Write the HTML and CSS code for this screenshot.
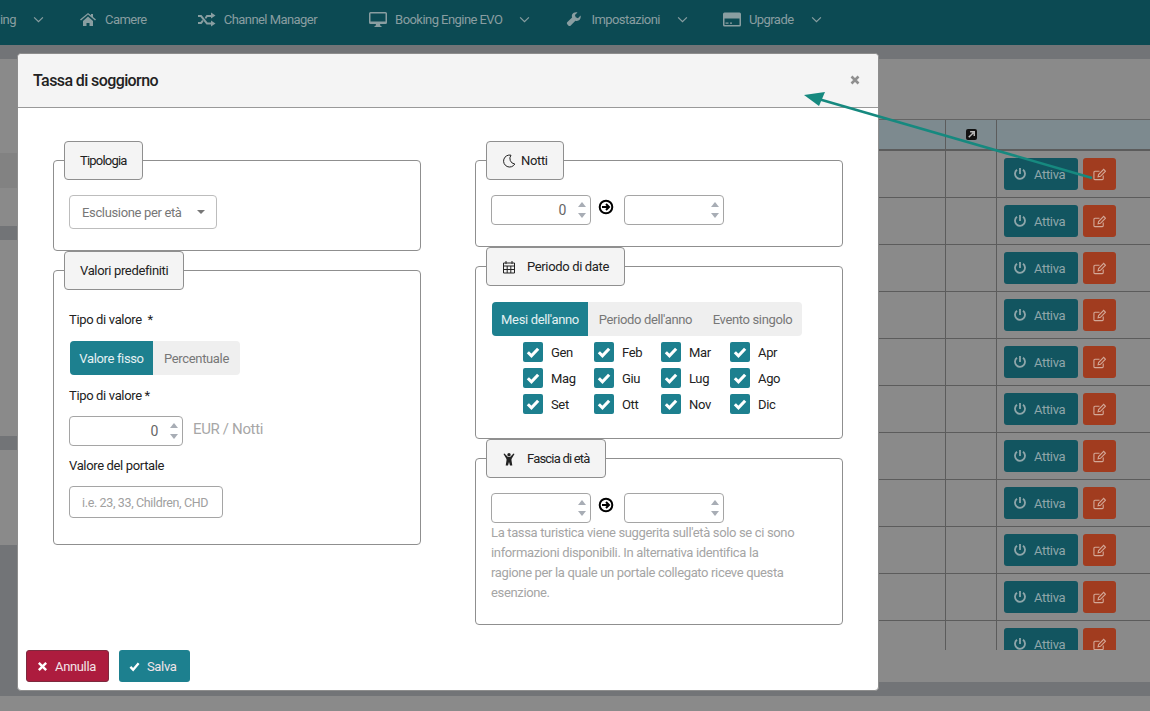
FILE: index.html
```html
<!DOCTYPE html>
<html lang="it">
<head>
<meta charset="utf-8">
<title>Tassa di soggiorno</title>
<link rel="stylesheet" href="styles.css">
</head>
<body>
<nav class="topnav">
  <span class="nav-item nav-cut">ing<svg class="chev" viewBox="0 0 12 8"><path d="M1 1.500l5 5 5-5"/></svg></span>
  <span class="nav-item nav-camere"><svg class="nav-ic" viewBox="0 0 16 14"><path d="M8 1L0 7.500l1 1 7-6 7 6 1-1-3-2.500V2h-2v1.300zM3 9l5-4.500L13 9v5H9.500v-3h-3v3H3z"/></svg>Camere</span>
  <span class="nav-item nav-channel"><svg class="nav-ic nav-ic-w" viewBox="0 0 18 14"><path d="M0 2.500h3.500l6 7.500H13V8l4.500 3L13 14v-2H8.500l-6-7.500H0zM0 9.500h2.500l1.800-2.200 1.200 1.600L3.500 11.500H0zM8.500 2.500H13V0l4.500 3L13 6V4.500H9.500L8 6.500 6.800 4.900z"/></svg>Channel Manager</span>
  <span class="nav-item nav-booking"><svg class="nav-ic nav-ic-w" viewBox="0 0 18 15"><path fill-rule="evenodd" d="M1.500 0h15A1.500 1.500 0 0 1 18 1.500v9a1.500 1.500 0 0 1-1.500 1.500H11l.5 2h1v1h-7v-1h1l.5-2H1.500A1.500 1.500 0 0 1 0 10.500v-9A1.500 1.500 0 0 1 1.500 0zM1.500 1.500v8h15v-8z"/></svg>Booking Engine EVO<svg class="chev" viewBox="0 0 12 8"><path d="M1 1.500l5 5 5-5"/></svg></span>
  <span class="nav-item nav-settings"><svg class="nav-ic" viewBox="0 0 16 16"><path d="M15.500 4l-3 3-2.500-1-1-2.500 3-3C9.500-.2 7 .7 6 2.700c-.6 1.200-.6 2.400-.2 3.500L.5 11.500a2 2 0 0 0 0 2.800l1 1a2 2 0 0 0 2.800 0l5.300-5.300c1.100.4 2.400.4 3.500-.2 2-1 3-3.500 2.400-5.800z"/></svg>Impostazioni<svg class="chev" viewBox="0 0 12 8"><path d="M1 1.500l5 5 5-5"/></svg></span>
  <span class="nav-item nav-upgrade"><svg class="nav-ic nav-ic-w" viewBox="0 0 18 14"><path fill-rule="evenodd" d="M1.500 0h15A1.500 1.500 0 0 1 18 1.500v11a1.500 1.500 0 0 1-1.500 1.500h-15A1.500 1.500 0 0 1 0 12.500v-11A1.500 1.500 0 0 1 1.500 0zM1.500 6v6.500h15V6zM2.500 10h3v1.200h-3zM7 10h2v1.200H7z"/></svg>Upgrade<svg class="chev" viewBox="0 0 12 8"><path d="M1 1.500l5 5 5-5"/></svg></span>
</nav>

<main class="page-bg">
  <div class="page-band"></div>
  <div class="bg-main">
    <div class="side-strip">
      <div class="strip s-a"></div>
      <div class="strip s-b"></div>
      <div class="strip s-c"></div>
      <div class="strip s-d"></div>
      <div class="strip s-e"></div>
      <div class="strip s-d"></div>
      <div class="strip s-f"></div>
      <div class="strip s-g"></div>
    </div>
    <div class="bg-right">
      <div class="bg-table">
        <div class="bg-head">
          <div class="cell-a"></div>
          <div class="cell-b"><span class="ext-ic"><svg viewBox="0 0 12 12"><path d="M3 9l5-5M4.500 3H9v4.500"/></svg></span></div>
          <div class="cell-c"></div>
        </div>
        <div class="bg-row"><div class="cell-a"></div><div class="cell-b"></div><div class="cell-c"><span class="activate"><svg class="pw" viewBox="0 0 14 14"><path d="M7 1v6M4 2.800a5 5 0 1 0 6 0"/></svg>Attiva</span><span class="edit"><svg class="ed" viewBox="0 0 14 14"><path d="M11 8v3.500a1 1 0 0 1-1 1H2a1 1 0 0 1-1-1v-7a1 1 0 0 1 1-1h5"/><path d="M5.500 9.500l.5-2.500 5.500-5.500 2 2L8 9z"/></svg></span></div></div>
        <div class="bg-row"><div class="cell-a"></div><div class="cell-b"></div><div class="cell-c"><span class="activate"><svg class="pw" viewBox="0 0 14 14"><path d="M7 1v6M4 2.800a5 5 0 1 0 6 0"/></svg>Attiva</span><span class="edit"><svg class="ed" viewBox="0 0 14 14"><path d="M11 8v3.500a1 1 0 0 1-1 1H2a1 1 0 0 1-1-1v-7a1 1 0 0 1 1-1h5"/><path d="M5.500 9.500l.5-2.500 5.500-5.500 2 2L8 9z"/></svg></span></div></div>
        <div class="bg-row"><div class="cell-a"></div><div class="cell-b"></div><div class="cell-c"><span class="activate"><svg class="pw" viewBox="0 0 14 14"><path d="M7 1v6M4 2.800a5 5 0 1 0 6 0"/></svg>Attiva</span><span class="edit"><svg class="ed" viewBox="0 0 14 14"><path d="M11 8v3.500a1 1 0 0 1-1 1H2a1 1 0 0 1-1-1v-7a1 1 0 0 1 1-1h5"/><path d="M5.500 9.500l.5-2.500 5.500-5.500 2 2L8 9z"/></svg></span></div></div>
        <div class="bg-row"><div class="cell-a"></div><div class="cell-b"></div><div class="cell-c"><span class="activate"><svg class="pw" viewBox="0 0 14 14"><path d="M7 1v6M4 2.800a5 5 0 1 0 6 0"/></svg>Attiva</span><span class="edit"><svg class="ed" viewBox="0 0 14 14"><path d="M11 8v3.500a1 1 0 0 1-1 1H2a1 1 0 0 1-1-1v-7a1 1 0 0 1 1-1h5"/><path d="M5.500 9.500l.5-2.500 5.500-5.500 2 2L8 9z"/></svg></span></div></div>
        <div class="bg-row"><div class="cell-a"></div><div class="cell-b"></div><div class="cell-c"><span class="activate"><svg class="pw" viewBox="0 0 14 14"><path d="M7 1v6M4 2.800a5 5 0 1 0 6 0"/></svg>Attiva</span><span class="edit"><svg class="ed" viewBox="0 0 14 14"><path d="M11 8v3.500a1 1 0 0 1-1 1H2a1 1 0 0 1-1-1v-7a1 1 0 0 1 1-1h5"/><path d="M5.500 9.500l.5-2.500 5.500-5.500 2 2L8 9z"/></svg></span></div></div>
        <div class="bg-row"><div class="cell-a"></div><div class="cell-b"></div><div class="cell-c"><span class="activate"><svg class="pw" viewBox="0 0 14 14"><path d="M7 1v6M4 2.800a5 5 0 1 0 6 0"/></svg>Attiva</span><span class="edit"><svg class="ed" viewBox="0 0 14 14"><path d="M11 8v3.500a1 1 0 0 1-1 1H2a1 1 0 0 1-1-1v-7a1 1 0 0 1 1-1h5"/><path d="M5.500 9.500l.5-2.500 5.500-5.500 2 2L8 9z"/></svg></span></div></div>
        <div class="bg-row"><div class="cell-a"></div><div class="cell-b"></div><div class="cell-c"><span class="activate"><svg class="pw" viewBox="0 0 14 14"><path d="M7 1v6M4 2.800a5 5 0 1 0 6 0"/></svg>Attiva</span><span class="edit"><svg class="ed" viewBox="0 0 14 14"><path d="M11 8v3.500a1 1 0 0 1-1 1H2a1 1 0 0 1-1-1v-7a1 1 0 0 1 1-1h5"/><path d="M5.500 9.500l.5-2.500 5.500-5.500 2 2L8 9z"/></svg></span></div></div>
        <div class="bg-row"><div class="cell-a"></div><div class="cell-b"></div><div class="cell-c"><span class="activate"><svg class="pw" viewBox="0 0 14 14"><path d="M7 1v6M4 2.800a5 5 0 1 0 6 0"/></svg>Attiva</span><span class="edit"><svg class="ed" viewBox="0 0 14 14"><path d="M11 8v3.500a1 1 0 0 1-1 1H2a1 1 0 0 1-1-1v-7a1 1 0 0 1 1-1h5"/><path d="M5.500 9.500l.5-2.500 5.500-5.500 2 2L8 9z"/></svg></span></div></div>
        <div class="bg-row"><div class="cell-a"></div><div class="cell-b"></div><div class="cell-c"><span class="activate"><svg class="pw" viewBox="0 0 14 14"><path d="M7 1v6M4 2.800a5 5 0 1 0 6 0"/></svg>Attiva</span><span class="edit"><svg class="ed" viewBox="0 0 14 14"><path d="M11 8v3.500a1 1 0 0 1-1 1H2a1 1 0 0 1-1-1v-7a1 1 0 0 1 1-1h5"/><path d="M5.500 9.500l.5-2.500 5.500-5.500 2 2L8 9z"/></svg></span></div></div>
        <div class="bg-row"><div class="cell-a"></div><div class="cell-b"></div><div class="cell-c"><span class="activate"><svg class="pw" viewBox="0 0 14 14"><path d="M7 1v6M4 2.800a5 5 0 1 0 6 0"/></svg>Attiva</span><span class="edit"><svg class="ed" viewBox="0 0 14 14"><path d="M11 8v3.500a1 1 0 0 1-1 1H2a1 1 0 0 1-1-1v-7a1 1 0 0 1 1-1h5"/><path d="M5.500 9.500l.5-2.500 5.500-5.500 2 2L8 9z"/></svg></span></div></div>
        <div class="bg-row"><div class="cell-a"></div><div class="cell-b"></div><div class="cell-c"><span class="activate"><svg class="pw" viewBox="0 0 14 14"><path d="M7 1v6M4 2.800a5 5 0 1 0 6 0"/></svg>Attiva</span><span class="edit"><svg class="ed" viewBox="0 0 14 14"><path d="M11 8v3.500a1 1 0 0 1-1 1H2a1 1 0 0 1-1-1v-7a1 1 0 0 1 1-1h5"/><path d="M5.500 9.500l.5-2.500 5.500-5.500 2 2L8 9z"/></svg></span></div></div>
      </div>
    </div>
  </div>
  <div class="page-band"></div>
</main>

<section class="dialog">
  <header class="dialog-head">
    <h1 class="dialog-title">Tassa di soggiorno</h1>
    <svg class="dialog-close" viewBox="0 0 10 10"><path d="M1.500 1.500l7 7M8.500 1.500l-7 7"/></svg>
  </header>
  <div class="dialog-body">
    <div class="col">
      <fieldset class="box box-type">
        <legend class="tag tag-tight">Tipologia</legend>
        <div class="select">Esclusione per età<span class="caret"></span></div>
      </fieldset>
      <fieldset class="box box-values">
        <legend class="tag">Valori predefiniti</legend>
        <div class="label label-first">Tipo di valore &nbsp;*</div>
        <div class="seg">
          <span class="seg-item seg-83 on">Valore fisso</span><span class="seg-item seg-87">Percentuale</span>
        </div>
        <div class="label label-second">Tipo di valore *</div>
        <div class="num-row">
          <div class="num num-wide">0<span class="spin"><i class="up"></i><i class="down"></i></span></div>
          <span class="unit">EUR / Notti</span>
        </div>
        <div class="label label-third">Valore del portale</div>
        <div class="text-input">i.e. 23, 33, Children, CHD</div>
      </fieldset>
    </div>
    <div class="col">
      <fieldset class="box box-nights">
        <legend class="tag"><svg class="tag-ic tag-moon" viewBox="0 0 14 14"><path d="M9 1.200A6 6 0 1 0 12.800 10 5.500 5.500 0 0 1 9 1.200z"/></svg>Notti</legend>
        <div class="range">
          <div class="num">0<span class="spin"><i class="up"></i><i class="down"></i></span></div>
          <svg class="go" viewBox="0 0 16 16"><circle cx="8" cy="8" r="6.300"/><path d="M4 8h7M8 5l3 3-3 3"/></svg>
          <div class="num"><span class="spin"><i class="up"></i><i class="down"></i></span></div>
        </div>
      </fieldset>
      <fieldset class="box box-dates">
        <legend class="tag"><svg class="tag-ic" viewBox="0 0 14 14"><path d="M1.500 3h11v10h-11zM1.500 6h11M4 1v3M10 1v3M5.200 6v7M8.800 6v7M1.500 9.500h11"/></svg>Periodo di date</legend>
        <div class="seg seg-dates">
          <span class="seg-item seg-96 on">Mesi dell'anno</span><span class="seg-item seg-115">Periodo dell'anno</span><span class="seg-item seg-99">Evento singolo</span>
        </div>
        <div class="months">
          <label class="month"><span class="chk"><svg viewBox="0 0 14 14"><path d="M3 7.200l2.800 2.800L11 4.500"/></svg></span>Gen</label>
          <label class="month"><span class="chk"><svg viewBox="0 0 14 14"><path d="M3 7.200l2.800 2.800L11 4.500"/></svg></span>Feb</label>
          <label class="month"><span class="chk"><svg viewBox="0 0 14 14"><path d="M3 7.200l2.800 2.800L11 4.500"/></svg></span>Mar</label>
          <label class="month"><span class="chk"><svg viewBox="0 0 14 14"><path d="M3 7.200l2.800 2.800L11 4.500"/></svg></span>Apr</label>
          <label class="month"><span class="chk"><svg viewBox="0 0 14 14"><path d="M3 7.200l2.800 2.800L11 4.500"/></svg></span>Mag</label>
          <label class="month"><span class="chk"><svg viewBox="0 0 14 14"><path d="M3 7.200l2.800 2.800L11 4.500"/></svg></span>Giu</label>
          <label class="month"><span class="chk"><svg viewBox="0 0 14 14"><path d="M3 7.200l2.800 2.800L11 4.500"/></svg></span>Lug</label>
          <label class="month"><span class="chk"><svg viewBox="0 0 14 14"><path d="M3 7.200l2.800 2.800L11 4.500"/></svg></span>Ago</label>
          <label class="month"><span class="chk"><svg viewBox="0 0 14 14"><path d="M3 7.200l2.800 2.800L11 4.500"/></svg></span>Set</label>
          <label class="month"><span class="chk"><svg viewBox="0 0 14 14"><path d="M3 7.200l2.800 2.800L11 4.500"/></svg></span>Ott</label>
          <label class="month"><span class="chk"><svg viewBox="0 0 14 14"><path d="M3 7.200l2.800 2.800L11 4.500"/></svg></span>Nov</label>
          <label class="month"><span class="chk"><svg viewBox="0 0 14 14"><path d="M3 7.200l2.800 2.800L11 4.500"/></svg></span>Dic</label>
        </div>
      </fieldset>
      <fieldset class="box box-age">
        <legend class="tag tag-tight"><svg class="tag-ic tag-solid" viewBox="0 0 14 14"><circle cx="7" cy="2.800" r="1.700"/><path d="M1.500 2l1-.6L6 5h2l3.500-3.600 1 .6L9.500 7v1.500l.8 5H8L7 10l-1 3.500H3.700l.8-5V7z"/></svg>Fascia di età</legend>
        <div class="range">
          <div class="num"><span class="spin"><i class="up"></i><i class="down"></i></span></div>
          <svg class="go" viewBox="0 0 16 16"><circle cx="8" cy="8" r="6.300"/><path d="M4 8h7M8 5l3 3-3 3"/></svg>
          <div class="num"><span class="spin"><i class="up"></i><i class="down"></i></span></div>
        </div>
        <p class="help">La tassa turistica viene suggerita sull'età solo se ci sono informazioni disponibili. In alternativa identifica la ragione per la quale un portale collegato riceve questa esenzione.</p>
      </fieldset>
    </div>
  </div>
  <footer class="dialog-foot">
    <span class="btn btn-cancel"><svg viewBox="0 0 12 12"><path d="M2 2l8 8M10 2l-8 8"/></svg>Annulla</span>
    <span class="btn btn-save"><svg viewBox="0 0 12 12"><path d="M1.500 6.500l3 3 6-7"/></svg>Salva</span>
  </footer>
</section>

<svg class="arrow" viewBox="800 88 296 94"><path class="arrow-line" d="M1092 178L815 98"/><path class="arrow-head" d="M804 95l21-3-6 14z"/></svg>
</body>
</html>
```
FILE: styles.css
```css
* { box-sizing: border-box; }
html { background: #8a8a8a; }
html, body { margin: 0; height: 711px; }
body {
  position: relative;
  width: 1150px;
  font-family: "Roboto", "Lato", "Liberation Sans", sans-serif;
  font-size: 13px;
  letter-spacing: -.35px;
  color: #222;
  background: #8a8a8a;
  display: flex;
  flex-direction: column;
}
.topnav {
  height: 45px;
  background: #0c4a53;
  color: #899ea1;
  display: flex;
  align-items: center;
  padding-bottom: 7px;
  letter-spacing: -.55px;
  flex: none;
}
.nav-item { display: flex; align-items: center; white-space: nowrap; }
.nav-camere { margin-left: 36px; }
.nav-channel { margin-left: 51px; }
.nav-booking { margin-left: 52px; }
.nav-settings { margin-left: 36px; }
.nav-upgrade { margin-left: 35px; }
.nav-ic { width: 16px; height: 14px; margin-right: 9px; fill: #899ea1; flex: none; }
.nav-ic-w { width: 18px; height: 15px; margin-right: 8px; }
.chev { width: 11px; height: 7px; margin-left: 17px; fill: none; stroke: #899ea1; stroke-width: 1.400; flex: none; }

.page-bg { flex: 1; display: flex; flex-direction: column; background: #8a8a8a; }
.page-band { height: 14px; background: #727477; flex: none; }
.bg-main { display: flex; height: 623px; flex: none; }
.side-strip { width: 879px; flex: none; display: flex; flex-direction: column; }
.strip { flex: none; }
.s-a { height: 94px; }
.s-b { height: 35px; background: #828282; }
.s-c { height: 38px; }
.s-d { height: 14px; background: #727477; }
.s-e { height: 196px; }
.s-f { height: 95px; }
.s-g { height: 137px; background: #727477; }
.bg-right { flex: 1; padding-top: 60px; }
.bg-table { height: 531px; overflow: hidden; }
.bg-head { display: flex; height: 32px; background: #7d8a8f; border-top: 1px solid #646464; border-bottom: 2px solid #5c5c5c; }
.bg-row { display: flex; height: 47px; border-bottom: 1px solid #5c5c5c; }
.cell-a { width: 66px; }
.cell-b { width: 52px; border-left: 1px solid #5c5c5c; border-right: 1px solid #5c5c5c; display: flex; justify-content: center; align-items: center; }
.cell-c { flex: 1; padding: 7px 0 0 7px; display: flex; gap: 5px; align-items: flex-start; }
.ext-ic { width: 11px; height: 11px; background: #111; border-radius: 2px; display: block; }
.ext-ic svg { display: block; fill: none; stroke: #bbb; stroke-width: 1.600; }
.activate { width: 74px; height: 32px; border-radius: 3px; background: #125560; color: #8fa6aa; display: flex; align-items: center; padding-left: 9px; }
.pw { width: 14px; height: 14px; margin-right: 7px; fill: none; stroke: #8fa6aa; stroke-width: 1.800; flex: none; }
.edit { width: 33px; height: 32px; border-radius: 3px; background: #a13c1f; display: flex; align-items: center; justify-content: center; }
.ed { width: 13px; height: 13px; fill: none; stroke: #d3a898; stroke-width: 1.200; }

.dialog {
  position: absolute;
  left: 17px; top: 53px;
  width: 862px; height: 638px;
  background: #fff;
  border: 1px solid #8d8d8d;
  border-radius: 4px;
  display: flex;
  flex-direction: column;
  z-index: 2;
}
.dialog-head { height: 54px; flex: none; background: #f4f4f4; border-bottom: 1px solid #999; display: flex; align-items: center; justify-content: space-between; padding: 0 18px 0 15px; border-radius: 4px 4px 0 0; }
.dialog-title { margin: 0; font-size: 16px; font-weight: 500; letter-spacing: -.6px; color: #222; }
.dialog-close { width: 10px; height: 10px; fill: none; stroke: #8f8f8f; stroke-width: 2.600; margin-bottom: 1px; }
.dialog-body { flex: 1; display: flex; padding: 33px 0 0 35px; gap: 54px; min-height: 0; }
.col { width: 368px; display: flex; flex-direction: column; }
.box {
  margin: 0; min-width: 0;
  border: 1px solid #8f8f8f;
  border-radius: 4px;
  padding: 0 15px;
  background: #fff;
}
.tag {
  display: flex; align-items: center;
  height: 39px;
  padding: 0 15px;
  margin-left: -5px;
  background: #f4f4f4;
  border: 1px solid #8f8f8f;
  border-radius: 4px;
  color: #222;
  white-space: nowrap;
}
.tag-tight { letter-spacing: -.8px; }
.tag-ic { width: 14px; height: 14px; margin-right: 11px; fill: none; stroke: #222; stroke-width: 1; flex: none; }
.tag-moon { margin-right: 5px; }
.tag-solid { fill: #222; stroke: none; }
.box-type { height: 110px; }
.box-values { height: 294px; }
.box-nights { height: 106px; }
.box-dates { height: 192px; }
.box-age { height: 186px; }
.select { width: 148px; height: 34px; margin-top: 15px; border: 1px solid #bdbdbd; border-radius: 4px; display: flex; align-items: center; justify-content: space-between; padding: 0 11px 0 12px; color: #777; white-space: nowrap; }
.caret { width: 0; height: 0; border-left: 4.500px solid transparent; border-right: 4.500px solid transparent; border-top: 4.500px solid #777; }
.label { color: #222; line-height: 16px; }
.label-first { margin-top: 22px; }
.seg { display: inline-flex; height: 34px; margin: 13px 0 0 1px; border-radius: 4px; background: #efefef; overflow: hidden; vertical-align: top; }
.seg-item { display: flex; align-items: center; justify-content: center; color: #777; white-space: nowrap; }
.seg-83 { width: 83px; }
.seg-87 { width: 87px; }
.seg-96 { width: 96px; }
.seg-115 { width: 115px; }
.seg-99 { width: 99px; }
.seg-item.on { background: #1d808f; color: #e4f1f3; }
.label-second { margin-top: 13px; }
.num-row { display: flex; align-items: center; margin-top: 12px; }
.num { width: 100px; height: 30px; border: 1px solid #a5a5a5; border-radius: 4px; display: flex; align-items: center; justify-content: flex-end; color: #666; font-size: 14px; position: relative; padding-right: 24px; flex: none; }
.num-wide { width: 114px; }
.spin { position: absolute; right: 2px; top: 3px; bottom: 3px; width: 12px; display: flex; flex-direction: column; justify-content: space-between; align-items: center; padding: 3px 0; }
.spin i { width: 0; height: 0; border-left: 4px solid transparent; border-right: 4px solid transparent; }
.spin .up { border-bottom: 5px solid #a8adb5; }
.spin .down { border-top: 5px solid #a8adb5; }
.unit { margin-left: 10px; color: #a7a7a7; font-size: 15px; margin-top: -5px; }
.label-third { margin-top: 12px; }
.text-input { width: 154px; height: 32px; margin-top: 12px; border: 1px solid #a5a5a5; border-radius: 4px; display: flex; align-items: center; padding-left: 12px; color: #a0a0a0; font-size: 12.500px; white-space: nowrap; overflow: hidden; }
.range { display: flex; align-items: flex-start; margin-top: 15px; }
.go { width: 16px; height: 16px; margin: 4px 10px 0 7px; fill: none; stroke: #000; stroke-width: 2; flex: none; }
.seg-dates { margin-top: 16px; }
.months { display: grid; grid-template-columns: 71px 67px 69px auto; grid-auto-rows: 26px; margin: 3px 0 0 32px; }
.month { display: flex; align-items: center; color: #222; }
.chk { width: 20px; height: 20px; background: #1d808f; border-radius: 2px; margin-right: 8px; display: flex; align-items: center; justify-content: center; flex: none; }
.chk svg { width: 18px; height: 18px; fill: none; stroke: #fff; stroke-width: 2.400; }
.help { margin: 0; width: 305px; color: #a5a5a5; line-height: 20px; }
.dialog-foot { flex: none; display: flex; gap: 10px; padding: 0 0 8px 8px; }
.btn { height: 32px; display: flex; align-items: center; border-radius: 3px; color: #f2e4e8; padding: 0 12px 0 10px; }
.btn svg { width: 11px; height: 11px; margin-right: 7px; fill: none; stroke: #fff; stroke-width: 2.600; flex: none; }
.btn-cancel { width: 83px; background: #ad1c3e; border: 1px solid #7d2a3e; }
.btn-save { width: 71px; background: #1d808f; }
.arrow { position: absolute; left: 800px; top: 88px; width: 296px; height: 94px; z-index: 3; pointer-events: none; }
.arrow-line { stroke: #16897f; stroke-width: 2.500; fill: none; }
.arrow-head { fill: #16897f; }
```
